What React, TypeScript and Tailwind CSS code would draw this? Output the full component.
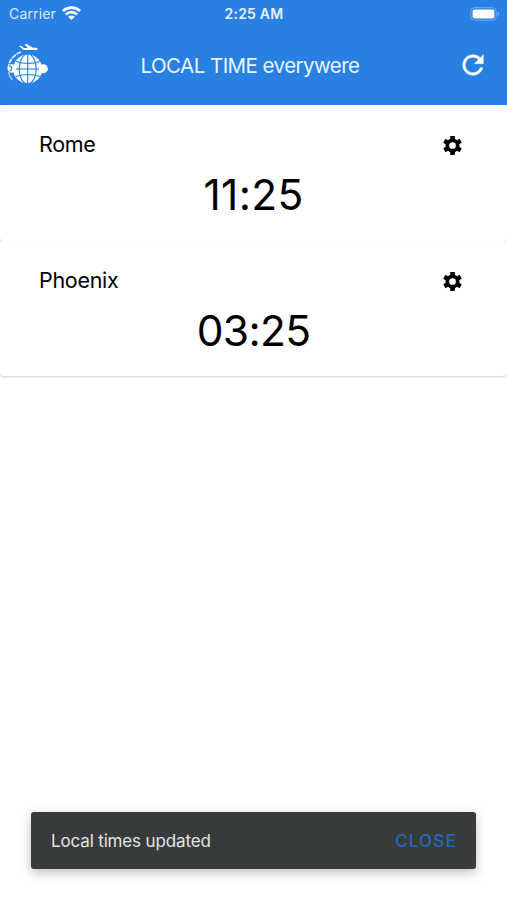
function StatusBar() {
  return (
    <div className="grid h-7 grid-cols-3 items-center pl-[9px] pr-[7px] text-[13.5px] leading-none">
      <div className="flex items-center gap-[6px] text-[#d9eafc]">
        <span className="text-[14px] tracking-[0.15px]">Carrier</span>
        <svg className="-mt-[2px]" width="19" height="14" viewBox="0 0 19 14" fill="none" stroke="#fff" strokeWidth="2.7">
          <path d="M1 5C5.8.5 13.2.5 18 5" />
          <path d="M3.9 8.4c3.2-3 8-3 11.2 0" />
          <path d="M6.2 10.7c1.9-1.7 4.7-1.7 6.6 0L9.5 14z" fill="#fff" stroke="none" />
        </svg>
      </div>
      <span className="-ml-px text-center text-[14px] font-semibold tracking-[0.2px] text-[#e4f1ff]">2:25 AM</span>
      <svg className="-mt-px justify-self-end" width="30" height="14" viewBox="0 0 30 14">
        <rect x=".7" y=".7" width="25.6" height="12.6" rx="4" fill="none" stroke="#6eaaf0" />
        <rect x="2.6" y="2.6" width="21.8" height="8.8" rx="2.2" fill="#fff" />
        <path d="M27.8 5v4c1.6-.5 1.6-3.5 0-4" fill="#8fbdf2" />
      </svg>
    </div>
  );
}

function GlobeLogo() {
  return (
    <svg width="42" height="42" viewBox="0 0 42 42" fill="none">
      <circle cx="20.7" cy="26" r="14.5" fill="#f2f9ff" />
      <g stroke="#2880e3" strokeWidth="1.1">
        <path d="M20.7 11v30M6 26h30M9 18.5c7 2.3 17 2.3 24 0M9 33.5c7-2.3 17-2.3 24 0" />
        <ellipse cx="20.7" cy="26" rx="8.5" ry="15" />
      </g>
      <path d="M14 9C7 11.5 2 17.5 1.5 24" stroke="#dceeff" strokeWidth="1.8" strokeDasharray="5 .8" />
      <path d="M1.5 29c.6 3.5 2 6 4 8" stroke="#b9d8f8" strokeWidth="1.2" />
      <circle cx="4.7" cy="25.5" r="4.2" fill="#fff" />
      <path d="M1.8 22.8c3.5-.3 4 4 .5 5.5" stroke="#2880e3" strokeWidth="1.2" />
      <circle cx="36.3" cy="25.7" r="4.5" fill="#fff" />
      <path d="m12 3 2-.2 3 2.2 3.7.1L17.5 1h2.2l6.3 3.8h3.3c1.7 0 2 2.2.3 2.2H16.5z" fill="#fff" />
    </svg>
  );
}

function RefreshIcon() {
  return (
    <svg width="30" height="30" viewBox="0 0 512 512" fill="#fff" stroke="#fff" strokeWidth="7">
      <path d="M256 388c-72.597 0-132-59.405-132-132 0-72.601 59.403-132 132-132 36.3 0 69.299 15.4 92.406 39.601L278 234h154V80l-51.698 51.702C348.406 99.798 304.406 80 256 80c-96.797 0-176 79.203-176 176s78.094 176 176 176c81.045 0 148.287-54.134 169.401-128H378.85c-18.745 49.561-67.138 84-122.85 84z" />
    </svg>
  );
}

function GearIcon() {
  return (
    <svg className="mt-[3px]" width="23" height="23" viewBox="0 0 24 24" fill="none" stroke="#000">
      <circle cx="12" cy="12" r="5.4" strokeWidth="3.8" />
      <path
        d="M12 2.2v4M12 17.8v4M3.5 7.1l3.5 2M17 14.9l3.5 2M20.5 7.1l-3.5 2M7 14.9l-3.5 2"
        strokeWidth="4.8"
      />
    </svg>
  );
}

function ClockCard({ city, time, spacing }: { city: string; time: string; spacing: string }) {
  return (
    <section className="h-[135.5px] rounded-[4px] bg-white px-[39px] pt-[25px] shadow-[0_1px_2px_rgba(0,0,0,0.18)]">
      <div className="flex h-[28px] items-center justify-between pr-[4px]">
        <h2 className="text-[21.5px] leading-7 tracking-[-0.3px]">{city}</h2>
        <GearIcon />
      </div>
      <div className={`mt-[10px] text-center text-[42.5px] leading-[54px] ${spacing}`}>{time}</div>
    </section>
  );
}

export default function App() {
  return (
    <div className="flex h-[900px] w-[507px] flex-col overflow-hidden bg-white font-['Inter','Liberation_Sans',sans-serif] text-black">
      <header className="h-[105px] shrink-0 bg-[#2880e3]">
        <StatusBar />
        <div className="grid h-[77px] grid-cols-[60px_1fr_60px] items-center">
          <div className="mb-[5px] pl-[7px]">
            <GlobeLogo />
          </div>
          <h1 className="mb-px pr-[7px] text-center text-[20.5px] tracking-[-0.55px] text-[#e8f4ff]">LOCAL TIME everywere</h1>
          <button className="mb-[3px] pl-[10.5px]" aria-label="Refresh">
            <RefreshIcon />
          </button>
        </div>
      </header>
      <main className="grow">
        <ClockCard city="Rome" time="11:25" spacing="tracking-[0.3px]" />
        <ClockCard city="Phoenix" time="03:25" spacing="tracking-[-0.7px]" />
      </main>
      <div className="mx-[31px] mb-[31px] flex h-[57px] shrink-0 items-center justify-between rounded-[3px] bg-[#383b3c] pl-5 pr-[19px] pt-[2px] shadow-[0_4px_12px_rgba(0,0,0,0.25)]">
        <span className="text-[17px] tracking-[-0.15px] text-[#e3e4e4]">Local times updated</span>
        <button className="text-[17px] font-medium tracking-[1.2px] text-[#2467b5]">CLOSE</button>
      </div>
    </div>
  );
}
